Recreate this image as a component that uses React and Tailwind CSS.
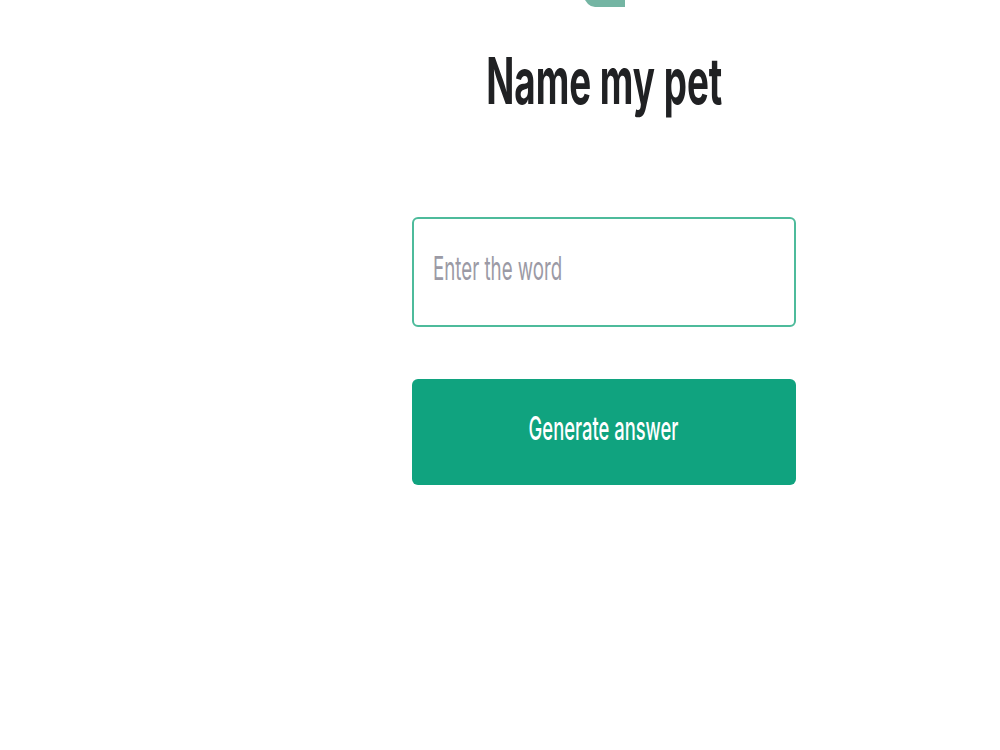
export default function App() {
  return (
    <div className="min-h-[750px] bg-white font-['Inter',sans-serif] overflow-hidden">
      <main className="ml-[412px] w-[384px] flex flex-col">
        {/* logo, cut off by the top of the page */}
        <svg className="ml-[173px] block" width="40" height="7" viewBox="0 0 40 7">
          <path d="M0 0H40V7H10Q6 7 3 4Z" fill="#74b5a3" />
        </svg>

        <h1 className="mt-[32px] h-[84px] flex items-center justify-center text-[64px] leading-none font-bold text-[#202123] whitespace-nowrap">
          <span className="inline-block scale-x-[0.575]">Name my pet</span>
        </h1>

        <div className="mt-[94px] h-[110px] rounded-[6px] border-2 border-[#4dbb9b] bg-white pl-[19px] pt-[29px]">
          <span className="block origin-left scale-x-[0.567] text-[33px] leading-[40px] text-[#9b9aa5] whitespace-nowrap">Enter the word</span>
        </div>

        <button className="mt-[52px] h-[106px] rounded-[6px] bg-[#10a37f] pb-[8px] text-[33px] leading-[40px] font-medium text-white whitespace-nowrap">
          <span className="inline-block scale-x-[0.557]">Generate answer</span>
        </button>
      </main>
    </div>
  );
}
